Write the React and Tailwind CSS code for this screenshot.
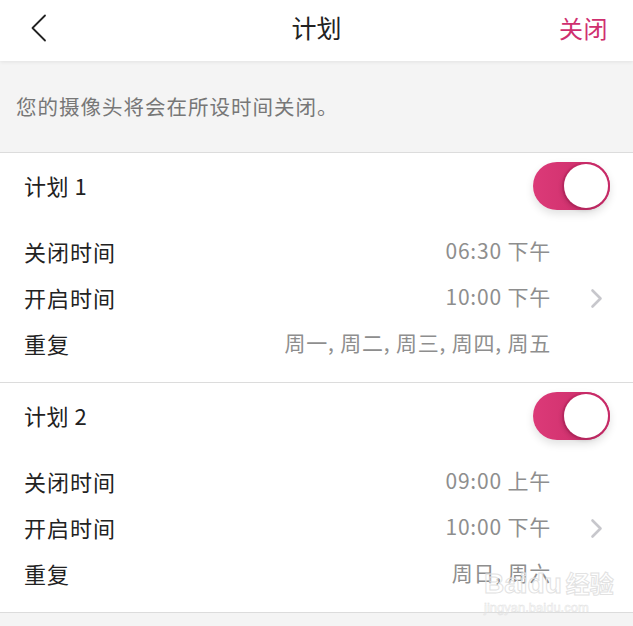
import React from 'react'

const font = { fontFamily: '"Noto Sans CJK SC", "Noto Sans", sans-serif' }

const plans = [
  { name: '计划 1', off: '06:30 下午', on: '10:00 下午', repeat: '周一, 周二, 周三, 周四, 周五' },
  { name: '计划 2', off: '09:00 上午', on: '10:00 下午', repeat: '周日, 周六' },
]

const Toggle = () => (
  <div className="relative w-[77px] h-[48px] rounded-full bg-gradient-to-r from-[#dc3a78] to-[#c92b68] shadow-[0_4px_8px_rgba(0,0,0,0.12)]">
    <div className="absolute right-0 top-0 w-[48px] h-[48px] rounded-full bg-[#c92b68] p-[2px]">
      <div className="w-full h-full rounded-full bg-white shadow-[-2px_2px_4px_rgba(0,0,0,0.15)]" />
    </div>
  </div>
)

const Row = ({ label, value }) => (
  <div className="flex items-center justify-between h-[46px]">
    <span className="text-[22px] tracking-[1px] text-[#222]">{label}</span>
    <span className="text-[21px] tracking-[0.8px] text-[#8e8e8e]">{value}</span>
  </div>
)

const Chevron = () => (
  <svg width="13" height="21" viewBox="0 0 13 21" fill="none">
    <path d="M2.5 2.5 L10.5 10.5 L2.5 18.5" stroke="#c7c7cc" strokeWidth="2.6" strokeLinecap="round" strokeLinejoin="round" />
  </svg>
)

const Plan = ({ plan }) => (
  <section className="bg-white border-b border-[#dcdcdc]">
    <div className="flex items-center justify-between h-[65px] pl-6 pr-[23px]">
      <span className="text-[22px] tracking-[0.5px] text-[#222]">{plan.name}</span>
      <Toggle />
    </div>
    <div className="flex items-center pt-[10px] pb-[16px] pl-6 pr-[30px]">
      <div className="flex-1 pr-[39px]">
        <Row label="关闭时间" value={plan.off} />
        <Row label="开启时间" value={plan.on} />
        <Row label="重复" value={plan.repeat} />
      </div>
      <div className="pt-[3px]">
        <Chevron />
      </div>
    </div>
  </section>
)

export default function App() {
  return (
    <div className="w-[633px] h-[626px] bg-[#f4f4f4] overflow-hidden relative" style={font}>
      {/* Header */}
      <header className="relative z-10 h-[61px] bg-white flex items-center justify-between pl-[30px] pr-[25px] pb-[5px] shadow-[0_1px_4px_rgba(0,0,0,0.08)]">
        <svg width="18" height="28" viewBox="0 0 18 28" fill="none">
          <path d="M15 1.5 L2.5 14 L15 26.5" stroke="#222" strokeWidth="1.8" strokeLinecap="round" strokeLinejoin="round" />
        </svg>
        <h1 className="absolute left-1/2 top-[10px] -translate-x-1/2 text-[25px] leading-[34px] text-[#222]">计划</h1>
        <button className="text-[24px] tracking-[0.5px] text-[#cf2f6f]">关闭</button>
      </header>

      {/* Hint */}
      <div className="h-[92px] flex items-center px-4 border-b border-[#dcdcdc]">
        <p className="text-[20.5px] tracking-[1px] text-[#777]">您的摄像头将会在所设时间关闭。</p>
      </div>

      {plans.map((p) => (
        <Plan key={p.name} plan={p} />
      ))}

      {/* watermark */}
      <div className="absolute left-[484px] top-[570px] leading-none pointer-events-none text-white/0 [-webkit-text-stroke:1px_#e2e2e2]">
        <div className="text-[28px] font-bold" style={{ fontFamily: '"Liberation Sans", "Noto Sans CJK SC", sans-serif' }}>Baidu<span className="ml-1 text-[24px]">经验</span></div>
        <div className="text-[13px] mt-[3px] [-webkit-text-stroke:0.5px_#e2e2e2]" style={{ fontFamily: '"Liberation Sans", sans-serif' }}>jingyan.baidu.com</div>
      </div>
    </div>
  )
}
